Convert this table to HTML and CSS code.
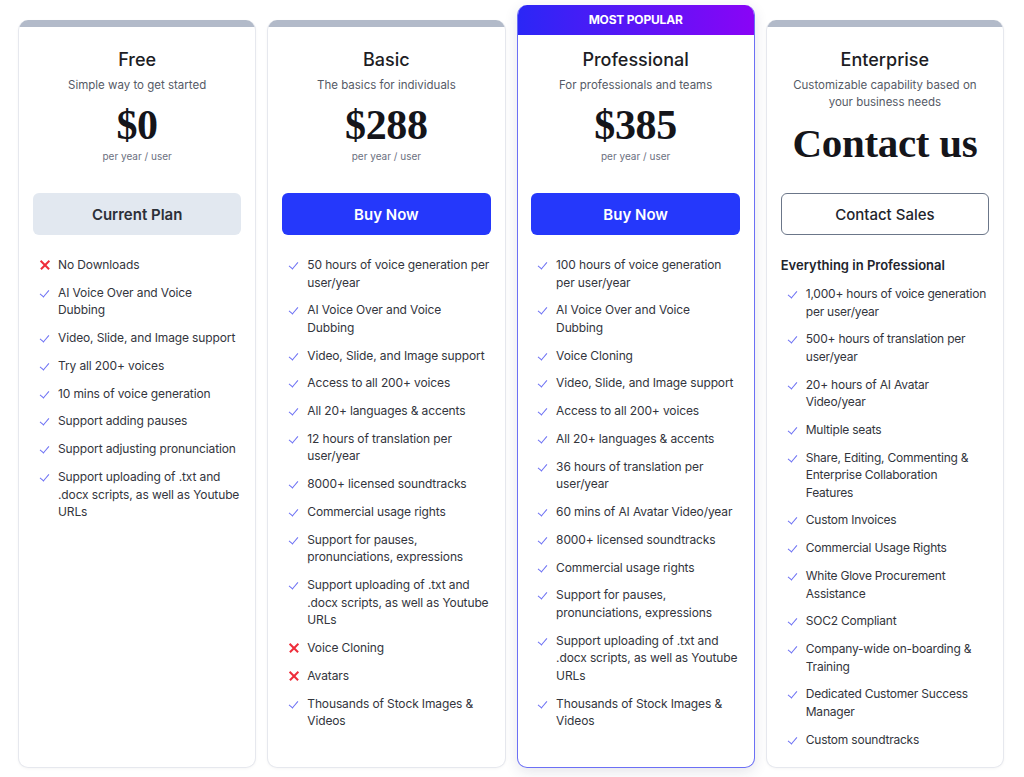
FILE: index.html
```html
<!DOCTYPE html>
<html>
<head>
<meta charset="utf-8">
<link rel="stylesheet" href="styles.css">
</head>
<body>
<div class="plans">
  <div class="card">
    <div class="bar"></div>
    <div class="body">
      <div class="head">
        <div class="title">Free</div>
        <div class="sub">Simple way to get started</div>
        <div class="price">$0</div>
        <div class="per">per year / user</div>
      </div>
      <div class="btn btn-gray">Current Plan</div>
      <ul class="feats">
        <li class="no"><span class="ic"></span>No Downloads</li>
        <li><span class="ic"></span>AI Voice Over and Voice Dubbing</li>
        <li><span class="ic"></span>Video, Slide, and Image support</li>
        <li><span class="ic"></span>Try all 200+ voices</li>
        <li><span class="ic"></span>10 mins of voice generation</li>
        <li><span class="ic"></span>Support adding pauses</li>
        <li><span class="ic"></span>Support adjusting pronunciation</li>
        <li><span class="ic"></span>Support uploading of .txt and .docx scripts, as well as Youtube URLs</li>
      </ul>
    </div>
  </div>
  <div class="card">
    <div class="bar"></div>
    <div class="body">
      <div class="head">
        <div class="title">Basic</div>
        <div class="sub">The basics for individuals</div>
        <div class="price">$288</div>
        <div class="per">per year / user</div>
      </div>
      <div class="btn btn-blue">Buy Now</div>
      <ul class="feats">
        <li><span class="ic"></span>50 hours of voice generation per user/year</li>
        <li><span class="ic"></span>AI Voice Over and Voice Dubbing</li>
        <li><span class="ic"></span>Video, Slide, and Image support</li>
        <li><span class="ic"></span>Access to all 200+ voices</li>
        <li><span class="ic"></span>All 20+ languages &amp; accents</li>
        <li><span class="ic"></span>12 hours of translation per user/year</li>
        <li><span class="ic"></span>8000+ licensed soundtracks</li>
        <li><span class="ic"></span>Commercial usage rights</li>
        <li><span class="ic"></span>Support for pauses, pronunciations, expressions</li>
        <li><span class="ic"></span>Support uploading of .txt and .docx scripts, as well as Youtube URLs</li>
        <li class="no"><span class="ic"></span>Voice Cloning</li>
        <li class="no"><span class="ic"></span>Avatars</li>
        <li><span class="ic"></span>Thousands of Stock Images &amp; Videos</li>
      </ul>
    </div>
  </div>
  <div class="card card-pro">
    <div class="popular">MOST POPULAR</div>
    <div class="body">
      <div class="head">
        <div class="title">Professional</div>
        <div class="sub">For professionals and teams</div>
        <div class="price">$385</div>
        <div class="per">per year / user</div>
      </div>
      <div class="btn btn-blue">Buy Now</div>
      <ul class="feats">
        <li><span class="ic"></span>100 hours of voice generation per user/year</li>
        <li><span class="ic"></span>AI Voice Over and Voice Dubbing</li>
        <li><span class="ic"></span>Voice Cloning</li>
        <li><span class="ic"></span>Video, Slide, and Image support</li>
        <li><span class="ic"></span>Access to all 200+ voices</li>
        <li><span class="ic"></span>All 20+ languages &amp; accents</li>
        <li><span class="ic"></span>36 hours of translation per user/year</li>
        <li><span class="ic"></span>60 mins of AI Avatar Video/year</li>
        <li><span class="ic"></span>8000+ licensed soundtracks</li>
        <li><span class="ic"></span>Commercial usage rights</li>
        <li><span class="ic"></span>Support for pauses, pronunciations, expressions</li>
        <li><span class="ic"></span>Support uploading of .txt and .docx scripts, as well as Youtube URLs</li>
        <li><span class="ic"></span>Thousands of Stock Images &amp; Videos</li>
      </ul>
    </div>
  </div>
  <div class="card">
    <div class="bar"></div>
    <div class="body">
      <div class="head">
        <div class="title">Enterprise</div>
        <div class="sub">Customizable capability based on your business needs</div>
        <div class="price price-contact">Contact us</div>
      </div>
      <div class="btn btn-outline">Contact Sales</div>
      <div class="everything">Everything in Professional</div>
      <ul class="feats feats-ent">
        <li><span class="ic"></span>1,000+ hours of voice generation per user/year</li>
        <li><span class="ic"></span>500+ hours of translation per user/year</li>
        <li><span class="ic"></span>20+ hours of AI Avatar Video/year</li>
        <li><span class="ic"></span>Multiple seats</li>
        <li><span class="ic"></span><span>Share, Editing, Commenting &amp; Enterprise Collaboration<br>Features</span></li>
        <li><span class="ic"></span>Custom Invoices</li>
        <li><span class="ic"></span>Commercial Usage Rights</li>
        <li><span class="ic"></span>White Glove Procurement Assistance</li>
        <li><span class="ic"></span>SOC2 Compliant</li>
        <li><span class="ic"></span>Company-wide on-boarding &amp; Training</li>
        <li><span class="ic"></span>Dedicated Customer Success Manager</li>
        <li><span class="ic"></span>Custom soundtracks</li>
      </ul>
    </div>
  </div>
</div>
</body>
</html>
```
FILE: styles.css
```css
* { box-sizing: border-box; }
html, body { margin: 0; background: #fff; }
body {
  font-family: Inter, "Noto Sans", sans-serif;
  color: #2b2b33;
  height: 777px;
  overflow: hidden;
}
.plans {
  display: grid;
  grid-template-columns: repeat(4, 1fr);
  gap: 11px;
  width: 986px;
  margin-left: 18px;
  padding-top: 5px;
  align-items: end;
}
.card {
  height: 748px;
  border: 1px solid #e6e8ee;
  border-top: none;
  border-radius: 10px;
  overflow: hidden;
  background: #fff;
  display: flex;
  flex-direction: column;
  box-shadow: 0 1px 3px rgba(0,0,0,0.04);
}
.bar {
  height: 7px;
  background: #b2bac9;
  flex: none;
}
.card-pro {
  height: 763px;
  border: 1.5px solid #6c70f5;
  border-top: none;
  box-shadow: 0 4px 14px rgba(40,40,80,0.12);
}
.popular {
  height: 30px;
  flex: none;
  background: linear-gradient(90deg, #2a27f6, #8a04f6);
  color: #fff;
  font-size: 12px;
  font-weight: 700;
  text-align: center;
  line-height: 29px;
  letter-spacing: -0.2px;
  margin: 0 -1.5px;
}
.body {
  padding: 22px 14px 0 14px;
}
.card-pro .body { padding: 14px 13.6px 0 13.6px; }
.head {
  height: 144px;
  text-align: center;
}
.title {
  font-size: 18px;
  font-weight: 500;
  line-height: 22px;
  color: #1d1d24;
}
.sub {
  font-size: 11.5px;
  line-height: 17px;
  color: #555a66;
  margin-top: 6px;
  padding: 0 10px;
}
.price {
  font-family: "Liberation Serif", "Times New Roman", serif;
  font-weight: 700;
  font-size: 42px;
  line-height: 44px;
  color: #15151a;
  margin-top: 9px;
  letter-spacing: -0.3px;
}
.price-contact { margin-top: 10px; font-size: 41px; }
.per {
  font-size: 10px;
  line-height: 14px;
  color: #6b7080;
  margin-top: 2px;
}
.btn {
  height: 42px;
  border-radius: 6px;
  font-size: 15px;
  font-weight: 600;
  display: flex;
  align-items: center;
  justify-content: center;
}
.btn-gray { background: #e2e8f0; color: #2c2f38; }
.btn-blue { background: #2538fb; color: #fff; }
.btn-outline { background: #fff; color: #22242c; border: 1px solid #6b7689; font-weight: 500; }
.feats {
  list-style: none;
  margin: 21px 0 0 0;
  padding: 0;
  font-size: 12px;
  line-height: 17.5px;
  letter-spacing: -0.12px;
  color: #33353d;
}
.feats li {
  display: flex;
  margin-bottom: 10.3px;
}
.ic {
  flex: none;
  width: 25px;
  height: 17.5px;
  position: relative;
}
.ic::before {
  content: "";
  position: absolute;
  left: 9px;
  top: 4px;
  width: 4px;
  height: 8px;
  border-right: 1.5px solid #6c70f4;
  border-bottom: 1.5px solid #6c70f4;
  transform: rotate(40deg);
}
.no .ic::before, .no .ic::after {
  content: "";
  position: absolute;
  left: 6px;
  top: 8px;
  width: 12px;
  height: 1.6px;
  background: #ee2d3a;
  border: none;
  transform: rotate(45deg);
}
.no .ic::after { transform: rotate(-45deg); }
.everything {
  margin-top: 22px;
  font-size: 13px;
  font-weight: 600;
  line-height: 17px;
  color: #22242c;
}
.feats-ent { margin-top: 11px; letter-spacing: -0.22px; }
```
